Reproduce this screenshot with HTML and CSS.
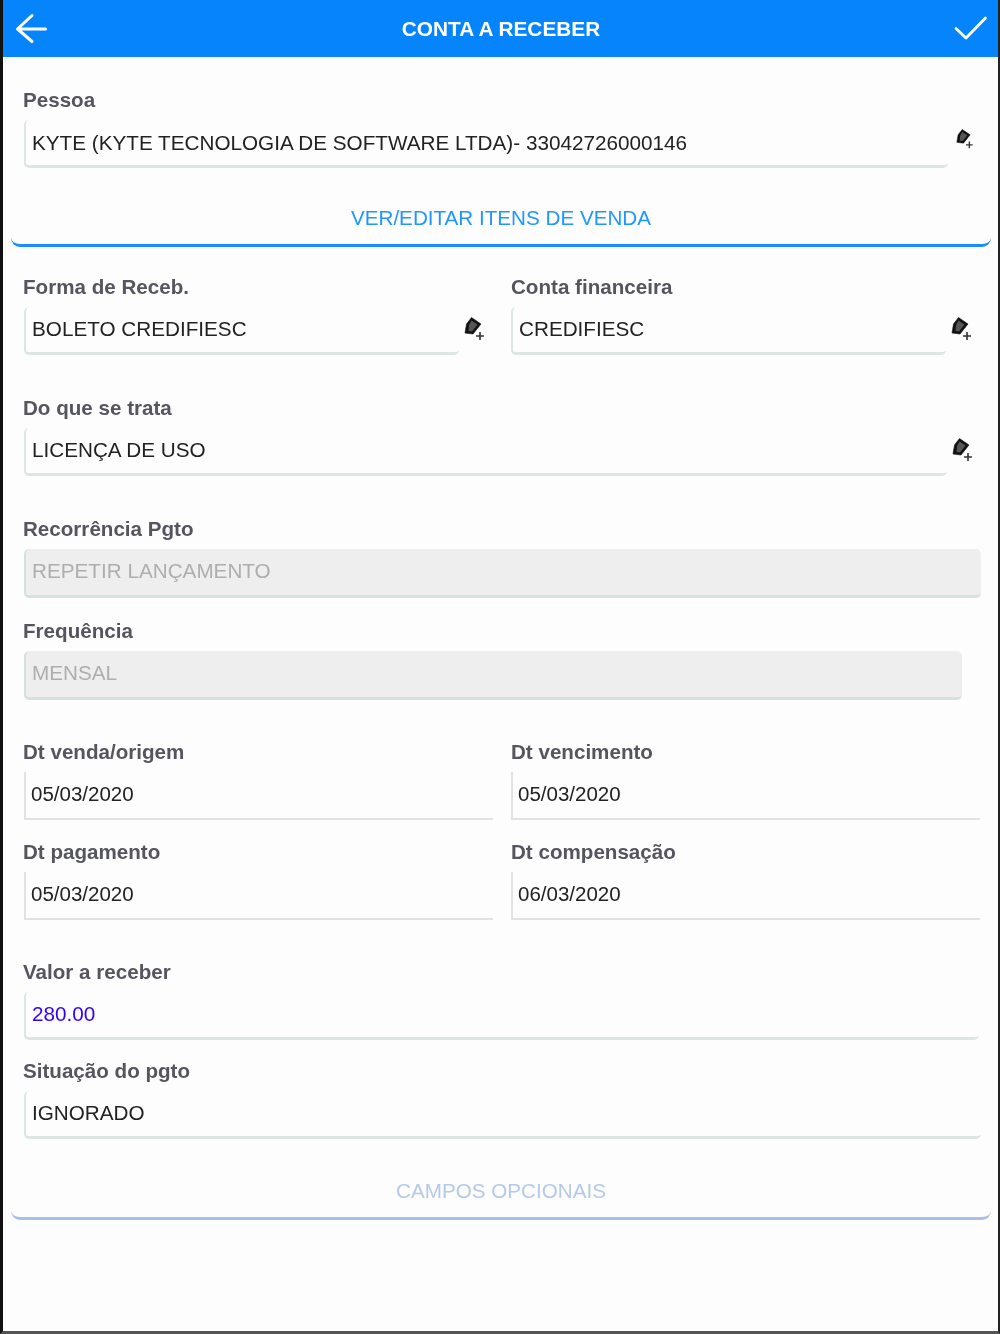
FILE: index.html
```html
<!DOCTYPE html>
<html lang="pt-BR">
<head>
<meta charset="utf-8">
<title>Conta a receber</title>
<link rel="stylesheet" href="styles.css">
</head>
<body>
<svg class="defs" width="0" height="0" aria-hidden="true">
  <symbol id="pen-plus" viewBox="0 0 24 24">
    <path d="M7.500.5 17 7 9 17 1 16 2.500 7z" fill="#111" stroke="#111" stroke-width=".6" stroke-linejoin="round"/>
    <path d="M7.500 3.500 13.500 7.500 8 14.500 4.500 14 5 8z" fill="#555"/>
    <path d="M16 15v8M12 19h8" stroke="#333" stroke-width="1.600" fill="none"/>
  </symbol>
</svg>
<div class="frame">
  <header class="topbar">
    <svg class="back" viewBox="0 0 34 32"><path d="M30.500 16H2.500M17 2.500 2.500 16 17 28.500" fill="none" stroke="#fff" stroke-width="3" stroke-linecap="round" stroke-linejoin="round"/></svg>
    <h1 class="title">CONTA A RECEBER</h1>
    <svg class="check" viewBox="0 0 34 26"><path d="M3 12.500 13 22 32.500 2" fill="none" stroke="#fff" stroke-width="2.800" stroke-linecap="round" stroke-linejoin="round"/></svg>
  </header>

  <main class="form">
    <div class="field">
      <label class="label">Pessoa</label>
      <div class="control">
        <div class="input input-first grow">KYTE (KYTE TECNOLOGIA DE SOFTWARE LTDA)- 33042726000146</div>
        <svg class="icon icon-small"><use href="#pen-plus"/></svg>
      </div>
    </div>

    <button class="section-btn section-btn-active" type="button">VER/EDITAR ITENS DE VENDA</button>

    <div class="two-col after-btn">
      <div class="field">
        <label class="label">Forma de Receb.</label>
        <div class="control">
          <div class="input grow">BOLETO CREDIFIESC</div>
          <svg class="icon"><use href="#pen-plus"/></svg>
        </div>
      </div>
      <div class="field">
        <label class="label">Conta financeira</label>
        <div class="control">
          <div class="input grow">CREDIFIESC</div>
          <svg class="icon"><use href="#pen-plus"/></svg>
        </div>
      </div>
    </div>

    <div class="field gap-xl">
      <label class="label">Do que se trata</label>
      <div class="control">
        <div class="input grow">LICENÇA DE USO</div>
        <svg class="icon"><use href="#pen-plus"/></svg>
      </div>
    </div>

    <div class="field gap-xl">
      <label class="label">Recorrência Pgto</label>
      <div class="input input-disabled">REPETIR LANÇAMENTO</div>
    </div>

    <div class="field gap-md">
      <label class="label">Frequência</label>
      <div class="input input-disabled input-short">MENSAL</div>
    </div>

    <div class="two-col gap-lg">
      <div class="field">
        <label class="label">Dt venda/origem</label>
        <div class="input input-date">05/03/2020</div>
      </div>
      <div class="field">
        <label class="label">Dt vencimento</label>
        <div class="input input-date">05/03/2020</div>
      </div>
    </div>

    <div class="two-col gap-sm">
      <div class="field">
        <label class="label">Dt pagamento</label>
        <div class="input input-date">05/03/2020</div>
      </div>
      <div class="field">
        <label class="label">Dt compensação</label>
        <div class="input input-date">06/03/2020</div>
      </div>
    </div>

    <div class="field gap-lg">
      <label class="label">Valor a receber</label>
      <div class="input input-value">280.00</div>
    </div>

    <div class="field gap-xs">
      <label class="label">Situação do pgto</label>
      <div class="input">IGNORADO</div>
    </div>

    <button class="section-btn section-btn-muted" type="button">CAMPOS OPCIONAIS</button>
  </main>
</div>
</body>
</html>
```
FILE: styles.css
```css
* { box-sizing: border-box; }

html, body {
  margin: 0;
  padding: 0;
  background: #fff;
}

.defs { position: absolute; }

.frame {
  width: 1000px;
  height: 1334px;
  overflow: hidden;
  background: #fdfdfd;
  border-left: 3px solid #111;
  border-right: 2px solid #222;
  border-bottom: 3px solid #555;
  font-family: "Liberation Sans", Arial, sans-serif;
  filter: blur(0.45px);
}

.topbar {
  height: 57px;
  background: #0584fb;
  display: flex;
  align-items: center;
  justify-content: space-between;
  padding: 0 11px 0 12px;
}

.back { width: 34px; height: 32px; }
.check { width: 34px; height: 26px; overflow: visible; }

.title {
  margin: 0;
  color: #fff;
  font-size: 20.800px;
  font-weight: 700;
}

.form {
  padding: 31px 0 0 0;
  display: flex;
  flex-direction: column;
}

.field,
.two-col {
  margin-left: 21px;
  margin-right: 17px;
}

.two-col {
  display: grid;
  grid-template-columns: 469px 469px;
  column-gap: 18px;
}

.two-col .field { margin: 0; }
.two-col .field + .field .label { margin-left: 0; }

.gap-xl { margin-top: 41px; }
.gap-lg { margin-top: 40px; }
.gap-md { margin-top: 21px; }
.gap-sm { margin-top: 20px; }
.gap-xs { margin-top: 19px; }
.after-btn { margin-top: 28px; }

.label {
  display: block;
  height: 24px;
  line-height: 24px;
  margin: 0 0 8px -1px;
  font-size: 20.600px;
  font-weight: 700;
  color: #55555f;
}

.control {
  display: flex;
  align-items: flex-start;
}

.grow {
  flex: 1;
  min-width: 0;
}

.input {
  height: 48px;
  line-height: 44px;
  padding-left: 6px;
  font-size: 20.700px;
  color: #222;
  white-space: nowrap;
  border-left: 2px solid #dce6e4;
  border-bottom: 3px solid #dce6e4;
  border-radius: 5px;
}

.input-first { line-height: 46px; }

.input-disabled {
  height: 49px;
  background: #eee;
  color: #aeaeae;
  border-bottom-color: #d3e2e1;
  border-left-color: #d3e2e1;
}

.input-short { margin-right: 19px; }

.input-date {
  padding-left: 5px;
  font-size: 20.500px;
  border-left: 2px solid #e2e2e2;
  border-bottom: 2px solid #e2e2e2;
  border-radius: 0;
}

.input-value { color: #2f00ff; margin-right: 2px; }

.icon {
  flex: none;
  width: 24px;
  height: 24px;
  margin: 10px 5px 0 5px;
}

.icon-small {
  width: 20px;
  height: 20px;
  margin: 9px 5px 0 8px;
}

.section-btn {
  display: block;
  height: 55px;
  margin: 24px 7px 0 8px;
  padding: 0;
  background: transparent;
  border: 0;
  border-bottom: 3px solid #1e90ff;
  border-radius: 9px;
  font-family: inherit;
  font-size: 20.650px;
  text-align: center;
}

.section-btn-active {
  color: #2196ff;
  border-bottom-color: #1a8cfb;
}

.section-btn-muted {
  margin-top: 26px;
  color: #b3cbe8;
  border-bottom-color: #a9c0e6;
}
```
